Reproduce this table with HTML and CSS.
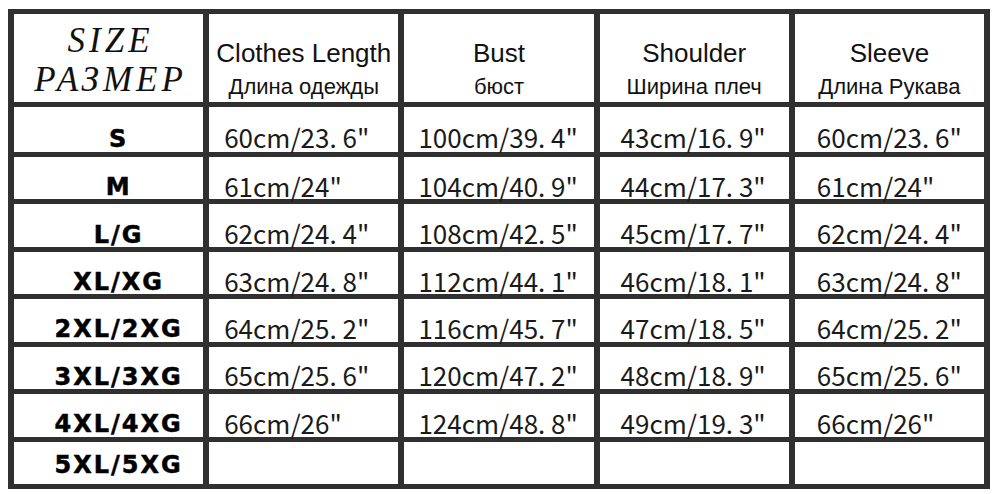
FILE: index.html
```html
<!DOCTYPE html>
<html lang="ru">
<head>
<meta charset="utf-8">
<title>Size chart</title>
<link rel="stylesheet" href="styles.css">
</head>
<body>
<div class="chart">
  <div class="cell head size-head"><span>SIZE</span><span>РАЗМЕР</span></div>
  <div class="cell head"><span class="en">Clothes Length</span><span class="ru">Длина одежды</span></div>
  <div class="cell head"><span class="en">Bust</span><span class="ru">бюст</span></div>
  <div class="cell head"><span class="en">Shoulder</span><span class="ru">Ширина плеч</span></div>
  <div class="cell head"><span class="en">Sleeve</span><span class="ru">Длина Рукава</span></div>

  <div class="cell size">S</div>
  <div class="cell val c2">60cm/23. 6"</div>
  <div class="cell val c3">100cm/39. 4"</div>
  <div class="cell val c4">43cm/16. 9"</div>
  <div class="cell val c5">60cm/23. 6"</div>

  <div class="cell size">M</div>
  <div class="cell val c2">61cm/24"</div>
  <div class="cell val c3">104cm/40. 9"</div>
  <div class="cell val c4">44cm/17. 3"</div>
  <div class="cell val c5">61cm/24"</div>

  <div class="cell size">L/G</div>
  <div class="cell val c2">62cm/24. 4"</div>
  <div class="cell val c3">108cm/42. 5"</div>
  <div class="cell val c4">45cm/17. 7"</div>
  <div class="cell val c5">62cm/24. 4"</div>

  <div class="cell size">XL/XG</div>
  <div class="cell val c2">63cm/24. 8"</div>
  <div class="cell val c3">112cm/44. 1"</div>
  <div class="cell val c4">46cm/18. 1"</div>
  <div class="cell val c5">63cm/24. 8"</div>

  <div class="cell size">2XL/2XG</div>
  <div class="cell val c2">64cm/25. 2"</div>
  <div class="cell val c3">116cm/45. 7"</div>
  <div class="cell val c4">47cm/18. 5"</div>
  <div class="cell val c5">64cm/25. 2"</div>

  <div class="cell size">3XL/3XG</div>
  <div class="cell val c2">65cm/25. 6"</div>
  <div class="cell val c3">120cm/47. 2"</div>
  <div class="cell val c4">48cm/18. 9"</div>
  <div class="cell val c5">65cm/25. 6"</div>

  <div class="cell size">4XL/4XG</div>
  <div class="cell val c2">66cm/26"</div>
  <div class="cell val c3">124cm/48. 8"</div>
  <div class="cell val c4">49cm/19. 3"</div>
  <div class="cell val c5">66cm/26"</div>

  <div class="cell size last">5XL/5XG</div>
  <div class="cell val c2"></div>
  <div class="cell val c3"></div>
  <div class="cell val c4"></div>
  <div class="cell val c5"></div>
</div>
</body>
</html>
```

FILE: styles.css
```css
html, body {
  margin: 0;
  padding: 0;
  background: #ffffff;
}

.chart {
  box-sizing: border-box;
  margin: 9px 0 0 8px;
  width: 982px;
  height: 480px;
  border-style: solid;
  border-color: #303030;
  border-width: 5px 6px;
  background: #303030;
  display: grid;
  grid-template-columns: repeat(5, minmax(0, 1fr));
  grid-template-rows: 88px 45px repeat(7, minmax(0, 1fr));
  gap: 5px 6px;
}

.cell {
  box-sizing: border-box;
  background: #ffffff;
  display: flex;
  align-items: center;
  min-width: 0;
  min-height: 0;
  white-space: nowrap;
  color: #111;
}

.head {
  flex-direction: column;
  justify-content: flex-end;
  font-family: "Liberation Sans", Arial, sans-serif;
}

.head .en {
  font-size: 26px;
  line-height: 30px;
  margin-bottom: 4px;
}

.head .ru {
  font-size: 22px;
  line-height: 30px;
}

.size-head {
  justify-content: center;
  font-family: "Liberation Serif", "Times New Roman", serif;
  font-style: italic;
  font-size: 35px;
  line-height: 39px;
  letter-spacing: 4px;
  padding: 3px 0 0 4px;
}

.size {
  justify-content: center;
  padding: 18px 0 0 20px;
  font-family: "DejaVu Sans", sans-serif;
  font-weight: bold;
  font-size: 24px;
  line-height: 24px;
  letter-spacing: 2px;
  color: #000;
  -webkit-text-stroke: 0.5px #000;
}

.size.last {
  padding-top: 4px;
}

.val {
  padding-top: 15px;
  font-family: "Noto Sans CJK SC", sans-serif;
  font-size: 26px;
  line-height: 26px;
  color: #1a1a1a;
}

.c2 { padding-left: 15px; }
.c3 { padding-left: 14px; }
.c4 { padding-left: 21px; }
.c5 { padding-left: 22px; }
```
